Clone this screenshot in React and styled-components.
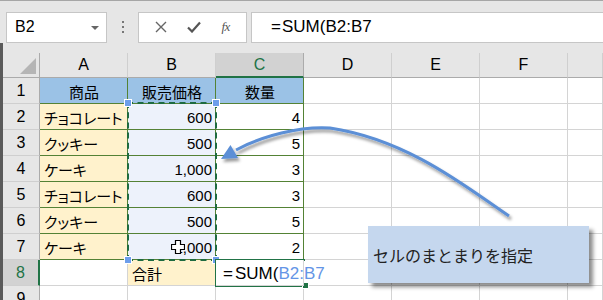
import React from 'react'
import styled, { createGlobalStyle } from 'styled-components'

const GlobalStyle = createGlobalStyle`
  body {
    margin: 0;
    background: #fff;
    font-family: "Liberation Sans", "Noto Sans CJK JP", sans-serif;
  }
`

const JP = '"Liberation Sans", "Noto Sans CJK JP", sans-serif'
const GREEN = '#217346'
const TABLE_LINE = '#548235'
const GRID_LINE = '#d4d4d4'

const Frame = styled.div`
  position: relative;
  width: 603px;
  height: 300px;
  overflow: hidden;
  background: #fff;
`

const Toolbar = styled.div`
  display: flex;
  align-items: center;
  height: 43px;
  padding: 10px 0 0 6px;
  box-sizing: border-box;
  border-top: 1px solid #a6a6a6;
  background: #e6e6e6;
`

const NameBox = styled.div`
  position: relative;
  display: flex;
  align-items: center;
  width: 101px;
  height: 31px;
  box-sizing: border-box;
  padding-left: 8px;
  border: 1px solid #c6c6c6;
  background: #fff;
  font-size: 16px;
  color: #000;

  &::after {
    content: '';
    position: absolute;
    right: 7px;
    top: 13px;
    border-left: 4px solid transparent;
    border-right: 4px solid transparent;
    border-top: 4px solid #666;
  }
`

const Dots = styled.div`
  display: flex;
  flex-direction: column;
  align-items: center;
  justify-content: center;
  gap: 3px;
  width: 31px;

  span {
    width: 2px;
    height: 2px;
    background: #777;
  }
`

const IconBox = styled.div`
  display: flex;
  align-items: center;
  justify-content: space-around;
  width: 109px;
  height: 31px;
  box-sizing: border-box;
  padding: 0 6px;
  border: 1px solid #c6c6c6;
  background: #fff;
  color: #666;
`

const Fx = styled.span`
  font-family: "Liberation Serif", serif;
  font-style: italic;
  font-size: 13px;
  color: #555;
  letter-spacing: -0.5px;
`

const FormulaBox = styled.div`
  display: flex;
  align-items: center;
  flex: 1;
  height: 31px;
  margin: 0 -4px 0 4px;
  box-sizing: border-box;
  padding-left: 19px;
  border: 1px solid #c6c6c6;
  background: #fff;
  font-family: ${JP};
  font-size: 17px;
  color: #000;
`

const Eq = styled.span`
  margin-right: ${p => p.$gap ?? 2}px;
`

const Sheet = styled.div`
  display: grid;
  grid-template-columns: 37px repeat(6, 88px) 1fr;
  grid-template-rows: 25px repeat(9, 26px);
  padding-top: 10px;
  border-left: 3px solid #5a5a5a;
  background: #e6e6e6;
`

const Corner = styled.div`
  position: relative;
  border-right: 1px solid #ababab;
  border-bottom: 1px solid #ababab;

  &::after {
    content: '';
    position: absolute;
    right: 3px;
    bottom: 3px;
    border-left: 16px solid transparent;
    border-bottom: 16px solid #b5b5b5;
  }
`

const ColHead = styled.div`
  display: flex;
  align-items: center;
  justify-content: center;
  box-sizing: border-box;
  background: ${p => (p.$active ? '#d2d2d2' : '#e6e6e6')};
  border-right: 1px solid ${p => (p.$active ? '#ababab' : '#cfcfcf')};
  border-bottom: ${p => (p.$active ? `2px solid ${GREEN}` : '1px solid #ababab')};
  font-size: 16px;
  color: ${p => (p.$active ? GREEN : '#000')};
`

const RowHead = styled.div`
  display: flex;
  align-items: center;
  justify-content: center;
  box-sizing: border-box;
  background: ${p => (p.$active ? '#d2d2d2' : '#e6e6e6')};
  border-right: ${p => (p.$active ? `2px solid ${GREEN}` : '1px solid #ababab')};
  border-bottom: 1px solid #cfcfcf;
  font-size: 16px;
  color: ${p => (p.$active ? GREEN : '#000')};
`

const Cell = styled.div`
  display: flex;
  align-items: center;
  justify-content: ${p => p.$align || 'flex-start'};
  box-sizing: border-box;
  padding: 2px 3px 0 4px;
  background: ${p => p.$bg || '#fff'};
  border-right: 1px solid ${p => p.$line || GRID_LINE};
  border-bottom: 1px solid ${p => p.$line || GRID_LINE};
  font-family: ${JP};
  font-size: 15px;
  font-feature-settings: "palt";
  color: #000;
  white-space: nowrap;
  overflow: visible;
`

const FormulaCell = styled(Cell)`
  position: relative;
  z-index: 1;
  padding-left: 7px;
  font-size: 17px;
`

const Ref = styled.span`
  color: #6495e6;
`

const Caret = styled.span`
  display: inline-block;
  width: 1px;
  height: 19px;
  margin-left: 2px;
  background: #000;
`

const Ants = styled.div`
  position: absolute;
  left: 127px;
  top: 102px;
  width: 90px;
  height: 159px;
  box-sizing: border-box;
  border: 2px dashed #1e6b40;
  pointer-events: none;
`

const Handle = styled.div`
  position: absolute;
  width: 6px;
  height: 6px;
  background: #6d9eeb;
  border: 1px solid #fff;
  transform: translate(-4px, -4px);
`

const ActiveCell = styled.div`
  position: absolute;
  left: 215px;
  top: 259px;
  width: 90px;
  height: 28px;
  box-sizing: border-box;
  border: 2px solid ${GREEN};
  border-right: none;

  &::after {
    content: '';
    position: absolute;
    right: -4px;
    bottom: -4px;
    width: 5px;
    height: 5px;
    background: ${GREEN};
    border: 1px solid #fff;
  }
`

const Overlay = styled.svg`
  position: absolute;
  left: 0;
  top: 0;
  pointer-events: none;
`

const Callout = styled.div`
  position: absolute;
  left: 368px;
  top: 226px;
  width: 221px;
  height: 57px;
  display: flex;
  align-items: center;
  box-sizing: border-box;
  padding: 0 0 0 5px;
  background: #c5d7ee;
  box-shadow: 4px 4px 4px rgba(0, 0, 0, 0.45);
  font-family: ${JP};
  font-size: 16px;
  color: #222;
`

const cols = ['A', 'B', 'C', 'D', 'E', 'F', '']

const rows = [
  ['チョコレート', '600', '4'],
  ['クッキー', '500', '5'],
  ['ケーキ', '1,000', '3'],
  ['チョコレート', '600', '3'],
  ['クッキー', '500', '5'],
  ['ケーキ', '1,000', '2'],
]

const Blank = ({ n }) =>
  Array.from({ length: n }, (_, i) => <Cell key={i} />)

const MoveCursor = () => (
  <svg width="14" height="14" viewBox="0 0 14 14" style={{ position: 'absolute', left: 171, top: 240 }}>
    <path d="M4.5 0.5h5v4h4v5h-4v4h-5v-4h-4v-5h4z" fill="#fff" stroke="#000" strokeWidth="1.2" />
  </svg>
)

export default function App() {
  return (
    <Frame>
      <GlobalStyle />
      <Toolbar>
        <NameBox>B2</NameBox>
        <Dots><span /><span /><span /></Dots>
        <IconBox>
          <svg width="12" height="12" viewBox="0 0 12 12">
            <path d="M1 1L11 11M11 1L1 11" stroke="#666" strokeWidth="1.4" />
          </svg>
          <svg width="14" height="12" viewBox="0 0 14 12">
            <path d="M1 6.5L5 10.5L13 1.5" stroke="#555" strokeWidth="2.2" fill="none" />
          </svg>
          <Fx>fx</Fx>
        </IconBox>
        <FormulaBox><Eq $gap={1}>=</Eq>SUM(B2:B7</FormulaBox>
      </Toolbar>

      <Sheet>
        <Corner />
        {cols.map((c, i) => (
          <ColHead key={i} $active={c === 'C'}>{c}</ColHead>
        ))}

        <RowHead>1</RowHead>
        <Cell $bg="#9bc2e6" $line={TABLE_LINE} $align="center">商品</Cell>
        <Cell $bg="#9bc2e6" $line={TABLE_LINE} $align="center">販売価格</Cell>
        <Cell $bg="#9bc2e6" $line={TABLE_LINE} $align="center">数量</Cell>
        <Blank n={4} />

        {rows.map((r, i) => (
          <React.Fragment key={i}>
            <RowHead>{i + 2}</RowHead>
            <Cell $bg="#fff2cc" $line={TABLE_LINE}>{r[0]}</Cell>
            <Cell $bg="#edf2fb" $line={TABLE_LINE} $align="flex-end">{r[1]}</Cell>
            <Cell $line={TABLE_LINE} $align="flex-end">{r[2]}</Cell>
            <Blank n={4} />
          </React.Fragment>
        ))}

        <RowHead $active>8</RowHead>
        <Cell />
        <Cell $bg="#fff2cc">合計</Cell>
        <FormulaCell>
          <Eq>=</Eq>SUM(<Ref>B2:B7</Ref><Caret />
        </FormulaCell>
        <Blank n={4} />

        <RowHead>9</RowHead>
        <Blank n={7} />
      </Sheet>

      <Ants />
      <Handle style={{ left: 128, top: 103 }} />
      <Handle style={{ left: 216, top: 103 }} />
      <Handle style={{ left: 128, top: 260 }} />
      <Handle style={{ left: 216, top: 260 }} />
      <ActiveCell />
      <MoveCursor />

      <Callout>セルのまとまりを指定</Callout>

      <Overlay width="603" height="300">
        <defs>
          <filter id="sh" x="-10%" y="-10%" width="130%" height="140%">
            <feDropShadow dx="2" dy="3" stdDeviation="1.5" floodColor="#000" floodOpacity="0.4" />
          </filter>
        </defs>
        <g filter="url(#sh)">
          <path
            d="M509 216C470 190 410 140 330 128C300 126 262 136 236 150"
            stroke="#5b8fd6"
            strokeWidth="3"
            fill="none"
          />
          <polygon points="221,159 238,158 230.5,145" fill="#5b8fd6" />
        </g>
      </Overlay>
    </Frame>
  )
}
